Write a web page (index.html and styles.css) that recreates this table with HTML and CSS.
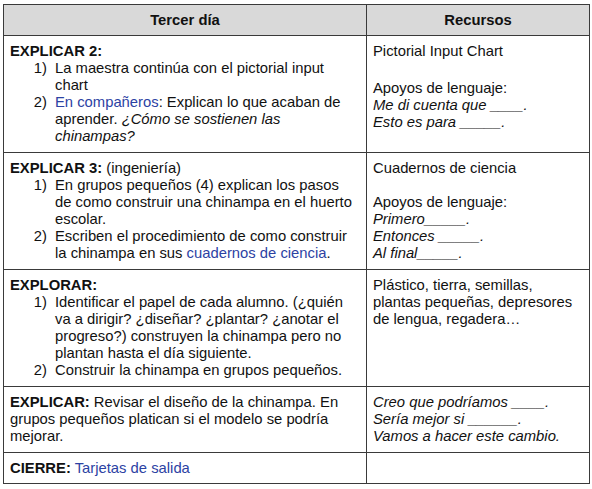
FILE: index.html
```html
<!DOCTYPE html>
<html lang="es">
<head>
<meta charset="utf-8">
<link rel="stylesheet" href="styles.css">
</head>
<body>
<table class="plan">
  <colgroup><col class="c-main"><col class="c-res"></colgroup>
  <thead>
    <tr><th>Tercer día</th><th>Recursos</th></tr>
  </thead>
  <tbody>
    <tr>
      <td>
        <p><b>EXPLICAR 2:</b></p>
        <ol class="steps">
          <li><span class="num">1)</span><span>La maestra continúa con el pictorial input chart</span></li>
          <li><span class="num">2)</span><span><span class="link">En compañeros</span>: Explican lo que acaban de aprender. <i>¿Cómo se sostienen las chinampas?</i></span></li>
        </ol>
      </td>
      <td>
        <p>Pictorial Input Chart</p>
        <p class="gap gap-wide">Apoyos de lenguaje:</p>
        <p><i>Me di cuenta que ____.</i></p>
        <p><i>Esto es para _____.</i></p>
      </td>
    </tr>
    <tr>
      <td>
        <p><b>EXPLICAR 3:</b> (ingeniería)</p>
        <ol class="steps">
          <li><span class="num">1)</span><span>En grupos pequeños (4) explican los pasos de como construir una chinampa en el huerto escolar.</span></li>
          <li><span class="num">2)</span><span>Escriben el procedimiento de como construir la chinampa en sus <span class="link">cuadernos de ciencia</span>.</span></li>
        </ol>
      </td>
      <td>
        <p>Cuadernos de ciencia</p>
        <p class="gap">Apoyos de lenguaje:</p>
        <p><i>Primero_____.</i></p>
        <p><i>Entonces _____.</i></p>
        <p><i>Al final_____.</i></p>
      </td>
    </tr>
    <tr>
      <td>
        <p><b>EXPLORAR:</b></p>
        <ol class="steps">
          <li><span class="num">1)</span><span>Identificar el papel de cada alumno. (¿quién va a dirigir? ¿diseñar? ¿plantar? ¿anotar el progreso?) construyen la chinampa pero no plantan hasta el día siguiente.</span></li>
          <li><span class="num">2)</span><span>Construir la chinampa en grupos pequeños.</span></li>
        </ol>
      </td>
      <td>
        <p>Plástico, tierra, semillas, plantas pequeñas, depresores de lengua, regadera…</p>
      </td>
    </tr>
    <tr>
      <td>
        <p><b>EXPLICAR:</b> Revisar el diseño de la chinampa. En grupos pequeños platican si el modelo se podría mejorar.</p>
      </td>
      <td>
        <p><i>Creo que podríamos ____.</i></p>
        <p><i>Sería mejor si ______.</i></p>
        <p><i>Vamos a hacer este cambio.</i></p>
      </td>
    </tr>
    <tr class="last">
      <td>
        <p><b>CIERRE:</b> <span class="link">Tarjetas de salida</span></p>
      </td>
      <td></td>
    </tr>
  </tbody>
</table>
</body>
</html>
```

FILE: styles.css
```css
html, body {
  margin: 0;
  padding: 0;
  background: #ffffff;
}

body {
  padding: 4px 0 0 3px;
  font-family: "Liberation Sans", Arial, sans-serif;
  font-size: 14.8px;
  line-height: 17px;
  color: #111111;
}

.plan {
  border-collapse: collapse;
  table-layout: fixed;
  width: 586px;
}

.c-main { width: 363px; }
.c-res { width: 223px; }

.plan th,
.plan td {
  border: 1px solid #3a3a3a;
  vertical-align: top;
  text-align: left;
}

.plan th {
  background: #d9d9d9;
  text-align: center;
  font-weight: bold;
  height: 30px;
  padding: 0;
  vertical-align: middle;
}

.plan td {
  padding: 7px 8px 7px 6px;
}

.plan .last td {
  padding-bottom: 6px;
}

p {
  margin: 0;
}

.gap {
  margin-top: 17px;
}

.gap-wide {
  margin-top: 20px;
}

.steps {
  list-style: none;
  margin: 0;
  padding: 0;
}

.steps li {
  display: flex;
}

.num {
  flex: 0 0 45px;
  text-align: right;
  padding-right: 8px;
  box-sizing: border-box;
}

.link {
  color: #2c42a3;
}
```
